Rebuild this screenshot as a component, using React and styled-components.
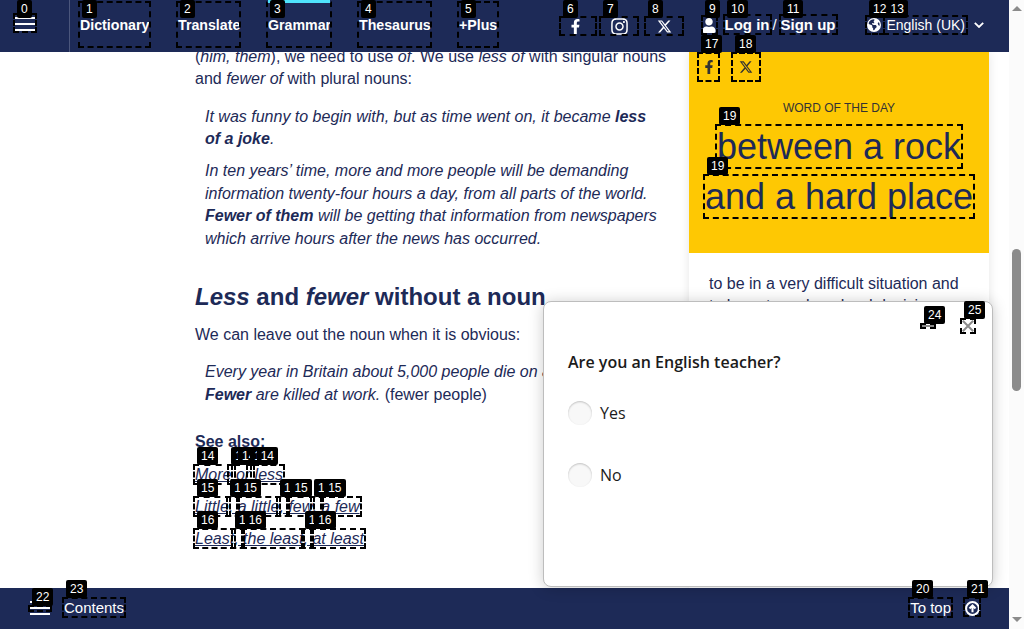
import React from "react";
import styled, { createGlobalStyle } from "styled-components";
import { FaFacebookF, FaInstagram, FaUser } from "react-icons/fa";
import { FaXTwitter, FaEarthAmericas } from "react-icons/fa6";

const navy = "#1d2a57";
const yellow = "#fec803";

const GlobalStyle = createGlobalStyle`
  * { box-sizing: border-box; }
  body {
    margin: 0;
    overflow: hidden;
    background: #fff;
    color: ${navy};
    font-family: "Liberation Sans", Arial, sans-serif;
    font-size: 16px;
  }
  h2, p { margin: 0; }
  svg { display: block; }
`;

const Screen = styled.div`
  position: relative;
  display: grid;
  grid-template-columns: 1009px 15px;
  width: 1024px;
  height: 629px;
  overflow: hidden;
`;

const Page = styled.div`
  display: grid;
  grid-template-rows: 52px 536px 41px;
  height: 629px;
`;

const Header = styled.header`
  display: flex;
  align-items: stretch;
  background: ${navy};
  color: #fff;
  position: relative;
  z-index: 1;
`;

const MenuSlot = styled.div`
  width: 70px;
  padding: 17px 0 0 15px;
  border-right: 1px solid #4b567c;
`;

const Bars = styled.div`
  display: flex;
  flex-direction: column;
  gap: 4px;
  width: 20px;
`;

const Bar = styled.span`
  height: 2px;
  background: #fff;
`;

const Nav = styled.nav`
  display: flex;
  gap: 29px;
  margin-left: 10px;
`;

const NavLink = styled.a`
  width: ${(p) => p.$w}px;
  border-top: 3px solid ${(p) => (p.$active ? "#4fe3fc" : "transparent")};
  padding-top: 13px;
  font-size: 14.2px;
  font-weight: bold;
  line-height: 18px;
  white-space: nowrap;
`;

const Social = styled.div`
  display: flex;
  align-items: center;
  margin-left: 57px;
`;

const IconSlot = styled.span`
  display: flex;
  justify-content: center;
  width: ${(p) => p.$w}px;
`;

const Account = styled.div`
  display: flex;
  align-items: center;
  margin-left: 16px;
  font-size: 15px;
  line-height: 18px;
  white-space: nowrap;
  padding-bottom: 2px;
`;

const Slash = styled.span`
  width: 11px;
  padding-left: 3px;
`;

const AccountLink = styled.b`
  margin-left: ${(p) => p.$gap || 0}px;
`;

const Language = styled.div`
  display: flex;
  align-items: center;
  margin-left: auto;
  margin-right: 25px;
  font-size: 14px;
  line-height: 18px;
  padding-bottom: 2px;
  white-space: nowrap;
`;

const LanguageName = styled.span`
  margin: 0 9px 0 5px;
`;

const Body = styled.main`
  display: grid;
  grid-template-columns: 480px 300px;
  column-gap: 14px;
  padding-left: 195px;
  overflow: hidden;
`;

const Article = styled.article`
  line-height: 22.5px;
  margin-top: -6.5px;
`;

const Paragraph = styled.p`
  margin-top: ${(p) => p.$top || 0}px;
`;

const Example = styled.p`
  margin-top: ${(p) => p.$top}px;
  padding-left: 10px;
  white-space: nowrap;
`;

const Heading = styled.h2`
  margin-top: 32px;
  font-size: 24px;
  line-height: 30px;
  white-space: nowrap;
`;

const SeeAlso = styled.div`
  display: flex;
  flex-direction: column;
  margin-top: 22.5px;
`;

const SeeTitle = styled.b`
  line-height: 26px;
  height: 30px;
`;

const SeeLink = styled.a`
  font-style: italic;
  text-decoration: underline;
  line-height: 32px;
  height: 32px;
  text-underline-offset: 1px;
`;

const Card = styled.aside`
  height: 536px;
  box-shadow: 0 0 10px rgba(0, 0, 0, 0.1);
`;

const WordPanel = styled.div`
  height: 201px;
  background: ${yellow};
  text-align: center;
`;

const ShareRow = styled.div`
  display: flex;
  align-items: center;
  gap: 8px;
  height: 30px;
  padding-left: 8px;
  color: #333;
`;

const WordLabel = styled.div`
  margin-top: 18px;
  color: #333;
  font-size: 12px;
  line-height: 16px;
`;

const Word = styled.div`
  margin-top: 6px;
  font-size: 36px;
  line-height: 50px;
  white-space: nowrap;
`;

const Meaning = styled.p`
  padding: 20px 0 0 20px;
  line-height: 22.4px;
  white-space: nowrap;
`;

const Footer = styled.footer`
  display: flex;
  align-items: center;
  padding: 0 29px 1px 30px;
  background: ${navy};
  color: #fff;
  font-size: 15px;
  line-height: 18px;
`;

const FooterLabel = styled.span`
  margin-left: ${(p) => p.$left};
`;

const TopIcon = styled.span`
  margin-left: 14px;
`;

const Scrollbar = styled.div`
  display: flex;
  flex-direction: column;
  align-items: center;
  justify-content: space-between;
  background: #fbfbfb;
  padding: 6px 0 7px;
`;

const Arrow = styled.i`
  border: 5px solid transparent;
  border-${(p) => (p.$down ? "top" : "bottom")}-color: #8b8b8b;
  border-${(p) => (p.$down ? "bottom" : "top")}-width: 0;
`;

const Thumb = styled.div`
  width: 9px;
  height: 142px;
  margin-top: 12px;
  border-radius: 5px;
  background: #8b8b8b;
`;

const Survey = styled.section`
  position: absolute;
  left: 543px;
  top: 301px;
  z-index: 2;
  width: 450px;
  height: 286px;
  padding: 0 24px;
  border: 1px solid #bdbdbd;
  border-radius: 8px;
  background: #fff;
  box-shadow: 0 1px 15px rgba(0, 0, 0, 0.2);
  color: #1b1b1b;
  font-family: "Open Sans", "Noto Sans", sans-serif;
`;

const SurveyTools = styled.div`
  display: flex;
  justify-content: flex-end;
  align-items: center;
  gap: 28px;
  height: 48px;
  margin-right: -6px;
`;

const Question = styled.div`
  height: 24px;
  font-weight: 600;
  line-height: 24px;
  white-space: nowrap;
`;

const Choice = styled.label`
  display: flex;
  align-items: center;
  gap: 8px;
  height: 24px;
  margin-top: ${(p) => p.$top}px;
`;

const Radio = styled.span`
  width: 24px;
  height: 24px;
  border-radius: 50%;
  background: #f8f8f8;
  box-shadow: inset 0 1px 2px rgba(0, 0, 0, 0.22);
`;

const MarkBox = styled.div`
  position: absolute;
  z-index: 3;
  left: ${(p) => p.$x}px;
  top: ${(p) => p.$y}px;
  width: ${(p) => p.$w}px;
  height: ${(p) => p.$h}px;
  border: 2px dashed #000;
  ${(p) => p.$openTop && "border-top-color: transparent;"}
`;

const MarkLabel = styled.span`
  position: absolute;
  z-index: 4;
  left: ${(p) => p.$x}px;
  top: ${(p) => p.$y}px;
  height: 18px;
  padding: 0 4px;
  border-radius: 2px;
  background: #000;
  color: #fff;
  font-size: 12px;
  line-height: 18px;
`;

// [number, left, top, right, bottom, open at the top]
const marks = [
  [0, 13, 13, 37, 33],
  [1, 78, 1, 151, 48],
  [2, 176, 1, 241, 48],
  [3, 266, 1, 332, 48, true],
  [4, 357, 1, 432, 48],
  [5, 457, 1, 499, 48],
  [6, 559, 16, 597, 36],
  [7, 599, 16, 639, 36],
  [8, 644, 16, 684, 36],
  [9, 701, 15, 718, 35],
  [10, 723, 14, 772, 35],
  [11, 779, 14, 838, 35],
  [12, 865, 15, 885, 35],
  [13, 882.5, 15, 968, 35],
  [14, 193, 464, 233, 485],
  [14, 227.3, 464, 236, 485],
  [14, 234, 464, 252, 485],
  [14, 246.3, 464, 255, 485],
  [14, 252.7, 464, 285, 485],
  [15, 193, 496, 230.8, 517],
  [15, 226.3, 496, 239.7, 517],
  [15, 235.7, 496, 281, 517],
  [15, 276, 496, 290, 517],
  [15, 286.4, 496, 315, 517],
  [15, 310, 496, 324, 517],
  [15, 320.2, 496, 362, 517],
  [16, 193, 528, 236, 549],
  [16, 231, 528, 245, 549],
  [16, 240.7, 528, 305, 549],
  [16, 300.8, 528, 314, 549],
  [16, 310.2, 528, 366, 549],
  [17, 697, 52, 720, 82],
  [18, 731, 52, 761, 82],
  [19, 715, 124, 963, 169],
  [19, 703, 174, 975, 219],
  [20, 908, 597, 953, 618],
  [21, 963, 597, 981, 617],
  [22, 28, 605, 52, 612],
  [23, 62, 597, 126, 618],
  [24, 920, 323, 936, 329],
  [25, 960, 318, 976, 334],
];

const Menu = () => (
  <Bars>
    <Bar />
    <Bar />
    <Bar />
  </Bars>
);

export default function App() {
  return (
    <>
      <GlobalStyle />
      <Screen>
        <Page>
          <Header>
            <MenuSlot>
              <Menu />
            </MenuSlot>
            <Nav>
              <NavLink $w={69}>Dictionary</NavLink>
              <NavLink $w={61}>Translate</NavLink>
              <NavLink $w={62} $active>Grammar</NavLink>
              <NavLink $w={71}>Thesaurus</NavLink>
              <NavLink $w={38}>+Plus</NavLink>
            </Nav>
            <Social>
              <IconSlot $w={42}><FaFacebookF size={15} /></IconSlot>
              <IconSlot $w={46}><FaInstagram size={19} /></IconSlot>
              <IconSlot $w={44}><FaXTwitter size={15} /></IconSlot>
            </Social>
            <Account>
              <IconSlot $w={14}><FaUser size={15} /></IconSlot>
              <AccountLink $gap={8.5}>Log in</AccountLink>
              <Slash>/</Slash>
              <AccountLink>Sign up</AccountLink>
            </Account>
            <Language>
              <FaEarthAmericas size={14} />
              <LanguageName>English (UK)</LanguageName>
              <svg width="10" height="6" viewBox="0 0 10 6" fill="none" stroke="#fff" strokeWidth="1.8">
                <path d="M.8.8 5 5 9.2.8" />
              </svg>
            </Language>
          </Header>

          <Body>
            <Article>
              <Paragraph>
                (<i>him, them</i>), we need to use <i>of</i>. We use <i>less of</i> with singular nouns
                <br />
                and <i>fewer of</i> with plural nouns:
              </Paragraph>
              <Example $top={15}>
                <i>It was funny to begin with, but as time went on, it became <b>less<br />of a joke</b>.</i>
              </Example>
              <Example $top={9.5}>
                <i>
                  In ten years’ time, more and more people will be demanding<br />
                  information twenty-four hours a day, from all parts of the world.<br />
                  <b>Fewer of them</b> will be getting that information from newspapers<br />
                  which arrive hours after the news has occurred.
                </i>
              </Example>
              <Heading><i>Less</i> and <i>fewer</i> without a noun</Heading>
              <Paragraph $top={12}>We can leave out the noun when it is obvious:</Paragraph>
              <Example $top={14.5}>
                <i>Every year in Britain about 5,000 people die on average.<br /><b>Fewer</b> are killed at work.</i> (fewer people)
              </Example>
              <SeeAlso>
                <SeeTitle>See also:</SeeTitle>
                <SeeLink>More or less</SeeLink>
                <SeeLink>Little, a little, few, a few</SeeLink>
                <SeeLink>Least, the least, at least</SeeLink>
              </SeeAlso>
            </Article>
            <Card>
              <WordPanel>
                <ShareRow>
                  <IconSlot $w={23}><FaFacebookF size={14} /></IconSlot>
                  <IconSlot $w={36}><FaXTwitter size={14} /></IconSlot>
                </ShareRow>
                <WordLabel>WORD OF THE DAY</WordLabel>
                <Word>between a rock<br />and a hard place</Word>
              </WordPanel>
              <Meaning>
                to be in a very difficult situation and<br />
                to have to make a hard decision
              </Meaning>
            </Card>
          </Body>

          <Footer>
            <Menu />
            <FooterLabel $left="14px">Contents</FooterLabel>
            <FooterLabel $left="auto">To top</FooterLabel>
            <TopIcon>
              <svg width="15" height="15" viewBox="0 0 14 14" fill="none" stroke="#fff" strokeWidth="1.9">
                <circle cx="7" cy="7" r="6" />
                <path d="M7 10.5V4.5M4.2 7 7 4.2 9.8 7" />
              </svg>
            </TopIcon>
          </Footer>
        </Page>

        <Scrollbar>
          <Arrow />
          <Thumb />
          <Arrow $down />
        </Scrollbar>

        <Survey>
          <SurveyTools>
            <svg width="12" height="2" viewBox="0 0 12 2"><path d="M0 1h12" stroke="#8b8b8b" strokeWidth="2" /></svg>
            <svg width="12" height="12" viewBox="0 0 12 12"><path d="M.8.8 11.2 11.2M11.2.8.8 11.2" stroke="#8b8b8b" strokeWidth="2" /></svg>
          </SurveyTools>
          <Question>Are you an English teacher?</Question>
          <Choice $top={27}><Radio />Yes</Choice>
          <Choice $top={38}><Radio />No</Choice>
        </Survey>

        {marks.map(([n, l, t, r, b, open], i) => (
          <React.Fragment key={i}>
            <MarkBox $x={l} $y={t} $w={r - l} $h={b - t} $openTop={open} />
            <MarkLabel $x={l + 4} $y={Math.max(0, t - 17)}>{n}</MarkLabel>
          </React.Fragment>
        ))}
      </Screen>
    </>
  );
}
